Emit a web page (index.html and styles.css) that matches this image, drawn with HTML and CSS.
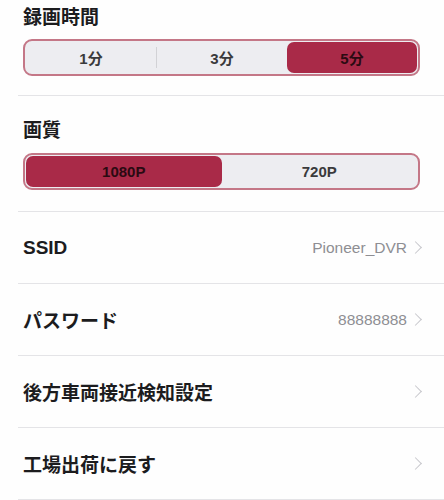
FILE: index.html
```html
<!DOCTYPE html>
<html lang="ja">
	<head>
		<meta charset="UTF-8" />
		<meta name="viewport" content="width=device-width, initial-scale=1.0" />
		<title>設定</title>
		<link rel="stylesheet" href="styles.css">
	</head>
	<body>
		<div class="section first">
			<h2>録画時間</h2>
			<div class="segmented">
				<button class="seg">1分</button>
				<span class="divider"></span>
				<button class="seg">3分</button>
				<button class="seg active">5分</button>
			</div>
		</div>

		<div class="section">
			<h2>画質</h2>
			<div class="segmented">
				<button class="seg active">1080P</button>
				<button class="seg">720P</button>
			</div>
		</div>

		<ul class="list">
			<li class="row">
				<span class="label">SSID</span>
				<span class="value">Pioneer_DVR</span>
				<span class="chevron"></span>
			</li>
			<li class="row">
				<span class="label">パスワード</span>
				<span class="value">88888888</span>
				<span class="chevron"></span>
			</li>
			<li class="row">
				<span class="label">後方車両接近検知設定</span>
				<span class="chevron"></span>
			</li>
			<li class="row">
				<span class="label">工場出荷に戻す</span>
				<span class="chevron"></span>
			</li>
		</ul>
	</body>
</html>
```

FILE: styles.css
```css
body {
	margin: 0;
	background: #fefefe;
	color: #1c1c1e;
	font-family: "Liberation Sans", "Noto Sans CJK JP", sans-serif;
}

.section {
	margin-left: 18px;
	padding: 23px 24px 21px 5px;
	border-bottom: 1px solid #e4e4e7;
	display: flex;
	flex-direction: column;
	gap: 10px;
}

.section.first {
	padding-top: 6px;
	padding-bottom: 19px;
	gap: 9px;
}

h2 {
	margin: 0;
	font-size: 19px;
	line-height: 24px;
	font-weight: 700;
}

.segmented {
	display: flex;
	align-items: center;
	height: 37px;
	box-sizing: border-box;
	border: 2px solid #c47787;
	border-radius: 9px;
	padding: 1px;
	background: #ededf1;
}

.seg {
	flex: 1;
	height: 100%;
	border: none;
	border-radius: 7px;
	background: transparent;
	font-family: inherit;
	font-size: 15px;
	font-weight: 700;
	color: #3a3a3c;
	padding: 0;
}

.seg.active {
	background: #a92a48;
	color: #2b0a12;
}

.divider {
	width: 1px;
	height: 21px;
	background: #d2d2d6;
}

.list {
	list-style: none;
	margin: 0 0 0 18px;
	padding: 0;
}

.row {
	display: flex;
	align-items: center;
	height: 71px;
	padding: 0 22px 0 5px;
	border-bottom: 1px solid #e4e4e7;
}

.label {
	flex: 1;
	font-size: 19px;
	font-weight: 700;
}

.value {
	font-size: 15.5px;
	color: #8e8e93;
	margin-right: 4px;
}

.chevron {
	width: 8px;
	height: 8px;
	border-top: 1.5px solid #c7c7cc;
	border-right: 1.5px solid #c7c7cc;
	transform: rotate(45deg);
	margin-right: 2px;
}
```
